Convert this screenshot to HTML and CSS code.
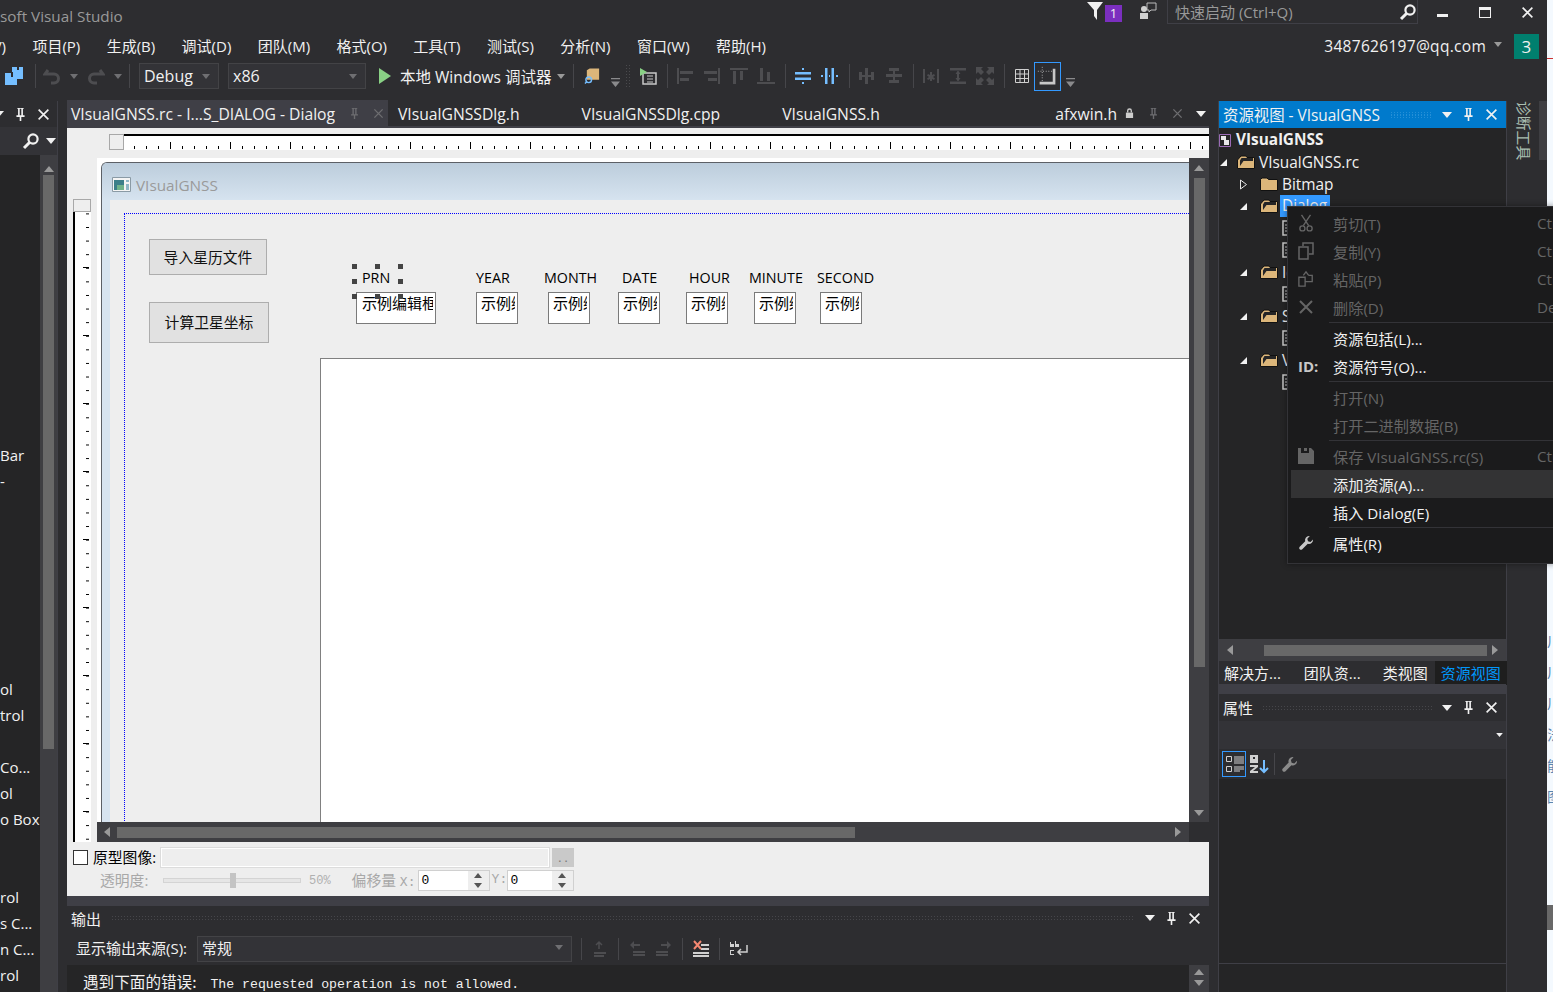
FILE: index.html
```html
<!DOCTYPE html>
<html lang="zh-CN">
<head>
    <meta charset="UTF-8">
    <title>VisualGNSS - Microsoft Visual Studio</title>
    <link rel="stylesheet" href="styles.css">
</head>
<body>
<svg class="sprite" xmlns="http://www.w3.org/2000/svg">
    <symbol id="pin" viewBox="0 0 16 16"><path fill="currentColor" fill-rule="evenodd" d="M4 0h8v1h-1v8h2v2H9v5H7v-5H3V9h2V1H4zM7 1v8h2V1z"/></symbol>
    <symbol id="close" viewBox="0 0 16 16"><path stroke="currentColor" stroke-width="2" d="M2 2l12 12M14 2L2 14"/></symbol>
    <symbol id="caret" viewBox="0 0 10 6"><path fill="currentColor" d="M0 0h10L5 6z"/></symbol>
    <symbol id="search" viewBox="0 0 18 18"><circle cx="11" cy="7" r="4.600" fill="none" stroke="currentColor" stroke-width="2.200"/><path stroke="currentColor" stroke-width="3" d="M7.500 10.500L2 16"/></symbol>
    <symbol id="folder-open" viewBox="0 0 18 14"><path fill="#dcb67a" stroke="#111" d="M.5 5L4 1h5l1 1.500h7.500v11H.5z"/><path fill="#252526" d="M4.500 3H16v3H6.500L3 11V5.500z"/></symbol>
    <symbol id="folder" viewBox="0 0 18 14"><path fill="#dcb67a" stroke="#111" d="M.5 2.500L2 1h5l1.500 1.500h9v11H.5z"/></symbol>
    <symbol id="wrench" viewBox="0 0 16 16"><path fill="currentColor" d="M11 1a4 4 0 0 0-3.800 5.200L1.500 12A1.800 1.800 0 0 0 4 14.500l5.800-5.700A4 4 0 0 0 15 4.500L12.500 7 10 6.300l-.7-2.500L11.800 1.100A4 4 0 0 0 11 1z"/></symbol>
    <symbol id="doc" viewBox="0 0 10 16"><path fill="#252526" stroke="#c8c8c8" stroke-width="1.500" d="M1 1h16v14H1z"/><path stroke="#c8c8c8" d="M3 5h6M3 8h6M3 11h6"/></symbol>
    <symbol id="align-l" viewBox="0 0 18 18"><path fill="currentColor" d="M1 1h2v16H1zM4 4h13v3H4zM4 11h9v3H4z"/></symbol>
    <symbol id="align-r" viewBox="0 0 18 18"><path fill="currentColor" d="M15 1h2v16h-2zM1 4h13v3H1zM5 11h9v3H5z"/></symbol>
    <symbol id="align-t" viewBox="0 0 18 18"><path fill="currentColor" d="M0 1h18v2H0zM3 4h3v13H3zM10 4h3v9h-3z"/></symbol>
    <symbol id="align-b" viewBox="0 0 18 18"><path fill="currentColor" d="M0 15h18v2H0zM3 1h3v13H3zM10 5h3v9h-3z"/></symbol>
    <symbol id="center-v" viewBox="0 0 18 18"><path fill="currentColor" d="M1 5h16v2.500H1zM1 10.500h16V13H1zM8 1h2v2H8zM8 15h2v2H8z"/></symbol>
    <symbol id="center-h" viewBox="0 0 18 18"><path fill="currentColor" d="M4 1h2.500v16H4zM10.500 1H13v16h-2.500zM0 8h2v2H0zM8 8h1v2H8zM15 8h2v2h-2z"/></symbol>
    <symbol id="space-h" viewBox="0 0 18 18"><path fill="currentColor" d="M1 5h3v8H1zM7 1h3v16H7zM13 5h3v8h-3zM4 8h3v2H4zM10 8h3v2h-3z"/></symbol>
    <symbol id="space-v" viewBox="0 0 18 18"><path fill="currentColor" d="M4 1h10v3H4zM1 7h16v3H1zM4 13h10v3H4zM8 4h2v3H8zM8 10h2v3H8z"/></symbol>
    <symbol id="size-w" viewBox="0 0 18 18"><path fill="currentColor" d="M1 2h2v14H1zM15 2h2v14h-2zM8 5h2v3l2-1 1 1.500L11 10l2 1.500L12 13l-2-1v2H8v-2l-2 1-1-1.500L7 10 5 8.500 6 7l2 1z"/></symbol>
    <symbol id="size-h" viewBox="0 0 18 18"><path fill="currentColor" d="M1 1h16v2.500H1zM1 14.500h16V17H1zM8.500 4h1l2 3H10v4h1.500l-2 3h-1l-2-3H8V7H6.500z"/></symbol>
    <symbol id="size-both" viewBox="0 0 18 18"><path fill="currentColor" d="M0 0h7L5 2l3 3-3 3-3-3-2 2zM18 0v7l-2-2-3 3-3-3 3-3-2-2zM0 18v-7l2 2 3-3 3 3-3 3 2 2zM18 18h-7l2-2-3-3 3-3 3 3 2-2z"/></symbol>
    <symbol id="grid" viewBox="0 0 14 14"><path fill="none" stroke="currentColor" d="M.5.500h13v13H.5zM.5 5h13M.5 9.500h13M5 .5v13M9.500.5v13"/></symbol>
    <symbol id="guide" viewBox="0 0 24 24"><path fill="currentColor" d="M18 3h3v18H3v-3h15z"/><path stroke="currentColor" stroke-dasharray="1 2" d="M1 6h18M6 1v17"/></symbol>
    <symbol id="toolbar-more" viewBox="0 0 10 10"><path fill="currentColor" d="M0 0h10v1.500H0zM0 4h10L5 10z"/></symbol>
    <symbol id="scissors" viewBox="0 0 16 20"><path fill="none" stroke="currentColor" stroke-width="1.500" d="M3 1l8 12M13 1L5 13"/><circle cx="4" cy="16" r="2.800" fill="none" stroke="currentColor" stroke-width="1.500"/><circle cx="12" cy="16" r="2.800" fill="none" stroke="currentColor" stroke-width="1.500"/></symbol>
    <symbol id="copy" viewBox="0 0 16 18"><path fill="none" stroke="currentColor" stroke-width="1.500" d="M5 4V1h10v11h-4M1 5h9v12H1z"/></symbol>
    <symbol id="paste" viewBox="0 0 18 18"><path fill="none" stroke="currentColor" stroke-width="1.500" d="M1 7h7v10H1zM8 12h8V5h-4M6 5l3-4 3 4"/></symbol>
    <symbol id="disk" viewBox="0 0 16 16"><path fill="currentColor" fill-rule="evenodd" d="M0 0h3v5h8V0h2l3 3v13H0zM6 0h3v3H6z"/></symbol>
</svg>

<div class="app">
    <div class="main">
        <div class="titlebar">
            <span class="app-title">soft Visual Studio</span>
            <svg class="filter" viewBox="0 0 16 18"><path fill="#f1f1f1" d="M0 0h16L10 8v10L7 14V8z"/></svg>
            <span class="notify">1</span>
            <svg class="feedback" viewBox="0 0 18 18"><path fill="none" stroke="#bbb" d="M8 1h9v7h-5l-2 2v-2H8z"/><circle cx="5" cy="7" r="3" fill="#d0d0d0"/><path fill="#d0d0d0" d="M1 11h8v6H1z"/></svg>
            <div class="quick">
                <span>快速启动 (Ctrl+Q)</span>
                <svg class="ic18"><use href="#search"/></svg>
            </div>
            <span class="win-min"></span>
            <span class="win-max"></span>
            <svg class="win-close"><use href="#close"/></svg>
        </div>

        <div class="menubar">
            <span class="cut"><span>V)</span></span>
            <span>项目(P)</span>
            <span>生成(B)</span>
            <span>调试(D)</span>
            <span>团队(M)</span>
            <span>格式(O)</span>
            <span>工具(T)</span>
            <span>测试(S)</span>
            <span>分析(N)</span>
            <span>窗口(W)</span>
            <span>帮助(H)</span>
            <span class="account">3487626197@qq.com</span>
            <svg class="account-caret"><use href="#caret"/></svg>
            <span class="account-badge">3</span>
        </div>

        <div class="toolbar">
            <svg class="save" viewBox="0 0 20 20"><path fill="#75beff" d="M8 1h5v3h2V1h4v12h-6v6H1V7h7z"/><path fill="#2d2d30" d="M7 6h2v5H7z"/></svg>
            <span class="sep sep-a"></span>
            <svg class="tool dim" viewBox="0 0 18 18"><path fill="none" stroke="currentColor" stroke-width="3" d="M5 3l-3 4h9a4 4 0 0 1 0 9H8"/></svg>
            <svg class="more"><use href="#caret"/></svg>
            <svg class="tool dim redo" viewBox="0 0 18 18"><path fill="none" stroke="currentColor" stroke-width="3" d="M13 3l3 4H7a4 4 0 0 0 0 9h3"/></svg>
            <svg class="more"><use href="#caret"/></svg>
            <span class="sep sep-b"></span>
            <div class="combo combo-debug"><span>Debug</span><svg class="more"><use href="#caret"/></svg></div>
            <div class="combo combo-x86"><span>x86</span><svg class="more"><use href="#caret"/></svg></div>
            <svg class="play" viewBox="0 0 12 16"><path fill="#89d185" d="M0 0l12 8-12 8z"/></svg>
            <span class="debug-label">本地 Windows 调试器</span>
            <svg class="more"><use href="#caret"/></svg>
            <span class="sep sep-c"></span>
            <svg class="tool find" viewBox="0 0 18 18"><path fill="#dcb67a" d="M3 3l3-2h10v12H3z"/><circle cx="5" cy="13" r="3" fill="none" stroke="#75beff" stroke-width="1.500"/><path stroke="#75beff" stroke-width="1.500" d="M3 15l-2 2"/></svg>
            <svg class="tb-more"><use href="#toolbar-more"/></svg>
            <span class="grip-v"></span>
            <svg class="tool test" viewBox="0 0 18 18"><path fill="none" stroke="#c8c8c8" stroke-width="1.500" d="M4 6h13v11H4z"/><path stroke="#c8c8c8" d="M8 9h6M8 12h6M8 15h6"/><path fill="#89d185" d="M1 1l7 4-7 4z"/></svg>
            <span class="sep sep-d"></span>
            <div class="tool-group dim">
                <svg class="tool"><use href="#align-l"/></svg>
                <svg class="tool"><use href="#align-r"/></svg>
                <svg class="tool"><use href="#align-t"/></svg>
                <svg class="tool"><use href="#align-b"/></svg>
            </div>
            <span class="sep sep-d"></span>
            <div class="tool-group blue">
                <svg class="tool"><use href="#center-v"/></svg>
                <svg class="tool"><use href="#center-h"/></svg>
            </div>
            <span class="sep sep-d"></span>
            <div class="tool-group dim">
                <svg class="tool"><use href="#space-h"/></svg>
                <svg class="tool"><use href="#space-v"/></svg>
            </div>
            <span class="sep sep-d"></span>
            <div class="tool-group dim">
                <svg class="tool"><use href="#size-w"/></svg>
                <svg class="tool"><use href="#size-h"/></svg>
                <svg class="tool"><use href="#size-both"/></svg>
            </div>
            <span class="sep sep-d"></span>
            <svg class="tool grid-ic"><use href="#grid"/></svg>
            <span class="guide-btn"><svg><use href="#guide"/></svg></span>
            <svg class="tb-more tb-last"><use href="#toolbar-more"/></svg>
        </div>

        <div class="workspace">
            <aside class="toolbox">
                <div class="panel-head">
                    <svg class="caret-w"><use href="#caret"/></svg>
                    <svg class="ic12"><use href="#pin"/></svg>
                    <svg class="ic12"><use href="#close"/></svg>
                </div>
                <div class="toolbox-search">
                    <svg class="ic18"><use href="#search"/></svg>
                    <svg class="caret-w"><use href="#caret"/></svg>
                </div>
                <div class="toolbox-body">
                    <ul class="toolbox-list">
                        <li>Bar</li>
                        <li>-</li>
                        <li></li><li></li><li></li><li></li><li></li><li></li><li></li>
                        <li>ol</li>
                        <li>trol</li>
                        <li></li>
                        <li>Co...</li>
                        <li>ol</li>
                        <li>o Box</li>
                        <li></li><li></li>
                        <li>rol</li>
                        <li>s C...</li>
                        <li>n C...</li>
                        <li>rol</li>
                    </ul>
                    <div class="vbar toolbox-bar">
                        <span class="arr arr-up"></span>
                        <span class="thumb toolbox-thumb"></span>
                    </div>
                </div>
            </aside>

            <section class="center">
                <div class="tabs">
                    <div class="tab active">
                        <span>VIsualGNSS.rc - I...S_DIALOG - Dialog</span>
                        <svg class="tab-pin"><use href="#pin"/></svg>
                        <svg class="tab-x"><use href="#close"/></svg>
                    </div>
                    <span class="tab">VIsualGNSSDlg.h</span>
                    <span class="tab">VIsualGNSSDlg.cpp</span>
                    <span class="tab">VIsualGNSS.h</span>
                    <div class="tab last">
                        <span>afxwin.h</span>
                        <svg class="tab-lock" viewBox="0 0 10 12"><path fill="none" stroke="#ccc" stroke-width="1.500" d="M3 5V3a2 2 0 0 1 4 0v2"/><path fill="#ccc" d="M1 5h8v6H1z"/></svg>
                        <svg class="tab-pin"><use href="#pin"/></svg>
                        <svg class="tab-x"><use href="#close"/></svg>
                        <svg class="tab-menu"><use href="#caret"/></svg>
                    </div>
                </div>

                <div class="designer">
                    <div class="ruler-top"><span class="ruler-corner"></span><span class="ruler-h"></span></div>
                    <div class="ruler-left"><span class="ruler-corner-v"></span><span class="ruler-v"></span></div>
                    <div class="canvas">
                        <div class="dlg">
                            <div class="dlg-caption">
                                <svg class="dlg-icon" viewBox="0 0 19 15"><path fill="#f4f4f4" stroke="#8a9aa5" d="M.5.500h18v14H.5z"/><path fill="#3c7f8a" d="M2 3h10v10H2z"/><path fill="#6fb28b" d="M5 8h7v5H5z"/><path fill="#8fb7c7" d="M14 3h3v2h-3zM14 7h3v6h-3z"/></svg>
                                <span>VIsualGNSS</span>
                            </div>
                            <div class="dlg-body">
                                <div class="guide"></div>
                                <button class="btn btn-import">导入星历文件</button>
                                <button class="btn btn-calc">计算卫星坐标</button>

                                <span class="lbl lbl-prn">PRN</span>
                                <span class="edit edit-prn">示例编辑框</span>
                                <span class="handle h1"></span><span class="handle h2"></span><span class="handle h3"></span>
                                <span class="handle h4"></span><span class="handle h5"></span>
                                <span class="handle h6"></span><span class="handle h7"></span><span class="handle h8"></span>

                                <span class="lbl lbl-year">YEAR</span>
                                <span class="lbl lbl-month">MONTH</span>
                                <span class="lbl lbl-date">DATE</span>
                                <span class="lbl lbl-hour">HOUR</span>
                                <span class="lbl lbl-minute">MINUTE</span>
                                <span class="lbl lbl-second">SECOND</span>
                                <span class="edit e-year">示例编辑框</span>
                                <span class="edit e-month">示例编辑框</span>
                                <span class="edit e-date">示例编辑框</span>
                                <span class="edit e-hour">示例编辑框</span>
                                <span class="edit e-minute">示例编辑框</span>
                                <span class="edit e-second">示例编辑框</span>

                                <div class="plot"></div>
                            </div>
                        </div>
                    </div>
                    <div class="vbar design-vbar">
                        <span class="arr arr-up"></span>
                        <span class="thumb design-thumb"></span>
                        <span class="arr arr-down"></span>
                    </div>
                    <div class="hbar">
                        <span class="arr arr-left"></span>
                        <span class="hthumb"></span>
                        <span class="arr arr-right"></span>
                    </div>
                    <div class="corner"></div>
                </div>

                <div class="proto">
                    <div class="proto-row">
                        <span class="check"></span>
                        <span class="proto-label">原型图像:</span>
                        <span class="path-box"></span>
                        <span class="dots">. .</span>
                    </div>
                    <div class="proto-row second">
                        <span class="muted lab-alpha">透明度:</span>
                        <span class="slider"><span class="slider-thumb"></span></span>
                        <span class="pct">50%</span>
                        <span class="muted lab-offset">偏移量 <span class="mono">X:</span></span>
                        <span class="spin"><span class="spin-val">0</span><span class="spin-btns"><i class="up"></i><i class="down"></i></span></span>
                        <span class="muted mono lab-y">Y:</span>
                        <span class="spin spin-y"><span class="spin-val">0</span><span class="spin-btns"><i class="up"></i><i class="down"></i></span></span>
                    </div>
                </div>

                <div class="output">
                    <div class="panel-head output-head">
                        <span class="panel-title">输出</span>
                        <span class="grip"></span>
                        <svg class="caret-w"><use href="#caret"/></svg>
                        <svg class="ic12"><use href="#pin"/></svg>
                        <svg class="ic12"><use href="#close"/></svg>
                    </div>
                    <div class="output-tools">
                        <span class="src-label">显示输出来源(S):</span>
                        <div class="src-combo"><span>常规</span><svg class="more"><use href="#caret"/></svg></div>
                        <span class="sep out-sep"></span>
                        <svg class="tool dim" viewBox="0 0 18 18"><path fill="currentColor" d="M3 12h12v2H3zM3 15h10v2H3z"/><path fill="none" stroke="currentColor" stroke-width="1.500" d="M8 9V3M5 5l3-3 3 3"/></svg>
                        <span class="sep out-sep"></span>
                        <div class="tool-group dim">
                            <svg class="tool" viewBox="0 0 18 18"><path fill="currentColor" d="M5 11h12v2H5zM5 14h12v2H5zM2 5l4-4v3h6v2H6v3z"/></svg>
                            <svg class="tool" viewBox="0 0 18 18"><path fill="currentColor" d="M1 11h12v2H1zM1 14h12v2H1zM16 5l-4-4v3H6v2h6v3z"/></svg>
                        </div>
                        <span class="sep out-sep"></span>
                        <svg class="tool" viewBox="0 0 18 18"><path fill="#d0d0d0" d="M9 4h8v2H9zM9 8h8v2H9zM1 12h16v2H1zM1 15h16v2H1z"/><path stroke="#f48771" stroke-width="2" d="M2 1l7 8M9 1l-7 8"/></svg>
                        <span class="sep out-sep"></span>
                        <svg class="tool wrap-ic" viewBox="0 0 20 18"><path fill="none" stroke="#d0d0d0" stroke-width="1.500" d="M18 5v7H9M12 9l-3 3 3 3"/><path fill="#d0d0d0" d="M1 2h1v5H1zM2 4h3v3H2zM6 1h1v6H6zM7 4h3v3H7zM1 10h4v1H2v3h3v1H1z"/></svg>
                    </div>
                    <div class="output-body">
                        <p class="output-text"><span class="cjk">遇到下面的错误:</span> The requested operation is not allowed.</p>
                        <div class="vbar out-vbar">
                            <span class="arr arr-up"></span>
                            <span class="arr arr-down"></span>
                        </div>
                    </div>
                </div>
            </section>

            <aside class="side">
                <div class="panel-head resview-head">
                    <span class="panel-title">资源视图 - VIsualGNSS</span>
                    <span class="grip grip-blue"></span>
                    <svg class="caret-w"><use href="#caret"/></svg>
                    <svg class="ic12"><use href="#pin"/></svg>
                    <svg class="ic12"><use href="#close"/></svg>
                </div>
                <div class="tree">
                    <div class="node root"><svg class="ic-root" viewBox="0 0 12 14"><path fill="none" stroke="#9b6bb5" d="M.5 1.500h11v12H.5z"/><path fill="#e8e8e8" d="M2 3h5v4H2zM5 7h5v5H5z"/></svg><b>VIsualGNSS</b></div>
                    <div class="node lv1"><span class="tri"></span><svg class="ic-folder"><use href="#folder-open"/></svg><span>VIsualGNSS.rc</span></div>
                    <div class="node lv2"><svg class="tri-closed" viewBox="0 0 7 11"><path fill="none" stroke="#e8e8e8" d="M.5 1v9l6-4.500z"/></svg><svg class="ic-folder"><use href="#folder"/></svg><span>Bitmap</span></div>
                    <div class="node lv2"><span class="tri"></span><svg class="ic-folder"><use href="#folder-open"/></svg><span class="selected">Dialog</span></div>
                    <div class="node lv3"><svg class="ic-doc"><use href="#doc"/></svg></div>
                    <div class="node lv3"><svg class="ic-doc"><use href="#doc"/></svg></div>
                    <div class="node lv2"><span class="tri"></span><svg class="ic-folder"><use href="#folder-open"/></svg><span>Icon</span></div>
                    <div class="node lv3"><svg class="ic-doc"><use href="#doc"/></svg></div>
                    <div class="node lv2"><span class="tri"></span><svg class="ic-folder"><use href="#folder-open"/></svg><span>String Table</span></div>
                    <div class="node lv3"><svg class="ic-doc"><use href="#doc"/></svg></div>
                    <div class="node lv2"><span class="tri"></span><svg class="ic-folder"><use href="#folder-open"/></svg><span>Version</span></div>
                    <div class="node lv3"><svg class="ic-doc"><use href="#doc"/></svg></div>
                </div>
                <div class="hbar side-hbar">
                    <span class="arr arr-left"></span>
                    <span class="hthumb side-thumb"></span>
                    <span class="arr arr-right"></span>
                </div>
                <div class="side-tabs">
                    <span>解决方...</span>
                    <span>团队资...</span>
                    <span>类视图</span>
                    <span class="on">资源视图</span>
                </div>
                <div class="panel-head props-head">
                    <span class="panel-title">属性</span>
                    <span class="grip"></span>
                    <svg class="caret-w"><use href="#caret"/></svg>
                    <svg class="ic12"><use href="#pin"/></svg>
                    <svg class="ic12"><use href="#close"/></svg>
                </div>
                <div class="props-combo"><svg class="caret-w"><use href="#caret"/></svg></div>
                <div class="props-tools">
                    <span class="cat-btn"><svg viewBox="0 0 20 20"><path fill="none" stroke="#d0d0d0" d="M1.500 2.500h5v5h-5zM1.500 12.500h5v5h-5z"/><path stroke="#d0d0d0" d="M9 3h10M9 5h10M9 7h10M9 9h10M9 13h10M9 15h10M9 17h6"/></svg></span>
                    <svg class="az" viewBox="0 0 20 20"><path fill="#d0d0d0" d="M1 1h8v8H1zM1 11h8v2L4 17h5v2H1v-2l5-4H1z"/><path fill="#2d2d30" d="M4 3h2v2H4z"/><path stroke="#75beff" stroke-width="2" fill="none" d="M15 6v12M11 14l4 4 4-4"/></svg>
                    <span class="sep props-sep"></span>
                    <svg class="props-wrench"><use href="#wrench"/></svg>
                </div>
                <div class="props-body"></div>
                <div class="side-foot"></div>
            </aside>

            <div class="strip"><span class="strip-label">诊断工具</span></div>
            <div class="strip-bar"></div>
        </div>
    </div>

    <div class="sliver">
        <span>川</span><span>川</span><span>川</span><span>法</span><span>能</span><span>图</span>
    </div>

    <div class="ctx">
        <div class="ctx-item off"><svg class="ctx-ic"><use href="#scissors"/></svg><span>剪切(T)</span><em>Ctrl+X</em></div>
        <div class="ctx-item off"><svg class="ctx-ic"><use href="#copy"/></svg><span>复制(Y)</span><em>Ctrl+C</em></div>
        <div class="ctx-item off"><svg class="ctx-ic"><use href="#paste"/></svg><span>粘贴(P)</span><em>Ctrl+V</em></div>
        <div class="ctx-item off"><svg class="ctx-ic"><use href="#close"/></svg><span>删除(D)</span><em>Del</em></div>
        <div class="ctx-sep"></div>
        <div class="ctx-item"><i class="ctx-ic"></i><span>资源包括(L)...</span></div>
        <div class="ctx-item"><b class="ctx-ic ctx-id">ID:</b><span>资源符号(O)...</span></div>
        <div class="ctx-sep"></div>
        <div class="ctx-item off"><i class="ctx-ic"></i><span>打开(N)</span></div>
        <div class="ctx-item off"><i class="ctx-ic"></i><span>打开二进制数据(B)</span></div>
        <div class="ctx-sep"></div>
        <div class="ctx-item off"><svg class="ctx-ic"><use href="#disk"/></svg><span>保存 VIsualGNSS.rc(S)</span><em>Ctrl+S</em></div>
        <div class="ctx-item hover"><i class="ctx-ic"></i><span>添加资源(A)...</span></div>
        <div class="ctx-item"><i class="ctx-ic"></i><span>插入 Dialog(E)</span></div>
        <div class="ctx-sep"></div>
        <div class="ctx-item"><svg class="ctx-ic ctx-wrench"><use href="#wrench"/></svg><span>属性(R)</span></div>
    </div>
</div>
</body>
</html>
```

FILE: styles.css
```css
* {
    box-sizing: border-box;
}

html, body {
    margin: 0;
    padding: 0;
    height: 100%;
    overflow: hidden;
    background: #2d2d30;
}

body {
    font-family: "Open Sans", "Noto Sans CJK SC", sans-serif;
    font-size: 15px;
    color: #f1f1f1;
}

svg {
    display: block;
    flex: none;
}

.sprite {
    display: none;
}

.app {
    position: relative;
    display: flex;
    width: 1553px;
    height: 992px;
    overflow: hidden;
}

.main {
    display: flex;
    flex-direction: column;
    width: 1547px;
    flex: none;
}

/* title bar */
.titlebar {
    display: flex;
    align-items: flex-start;
    height: 28px;
    flex: none;
}

.app-title {
    width: 124px;
    margin-top: 5px;
    color: #999;
    font-size: 15.300px;
    line-height: 22px;
    white-space: nowrap;
    flex: none;
}

.filter {
    width: 16px;
    height: 18px;
    margin: 2px 0 0 963px;
}

.notify {
    width: 17px;
    height: 17px;
    margin: 5px 0 0 2px;
    background: #7b2fbf;
    font-size: 13px;
    line-height: 17px;
    text-align: center;
}

.feedback {
    width: 18px;
    height: 18px;
    margin: 2px 0 0 17px;
}

.quick {
    display: flex;
    align-items: center;
    justify-content: space-between;
    width: 251px;
    height: 24px;
    margin-left: 10px;
    padding: 0 0 0 7px;
    border: 1px solid #3f3f46;
    border-top: 0;
    color: #999;
    white-space: nowrap;
}

.ic18 {
    width: 18px;
    height: 18px;
    color: #f1f1f1;
}

.win-min {
    width: 11px;
    height: 3px;
    margin: 14px 0 0 19px;
    background: #f1f1f1;
}

.win-max {
    width: 12px;
    height: 11px;
    margin: 7px 0 0 31px;
    border: 1px solid #f1f1f1;
    border-top-width: 3px;
}

.win-close {
    width: 13px;
    height: 13px;
    margin: 6px 0 0 30px;
    color: #f1f1f1;
}

/* menu */
.menubar {
    display: flex;
    align-items: center;
    gap: 26.400px;
    height: 34px;
    flex: none;
    padding-top: 2px;
    line-height: 20px;
    white-space: nowrap;
}

.menubar > span {
    flex: none;
}

.cut {
    display: flex;
    justify-content: flex-end;
    width: 6px;
    overflow: hidden;
}

.account {
    margin-left: 532px;
    font-size: 15.500px;
    letter-spacing: .3px;
}

.account-caret {
    width: 8px;
    height: 5px;
    margin: -4px 0 0 -18px;
    color: #999;
}

.account-badge {
    width: 25px;
    height: 25px;
    margin-left: -15px;
    background: #007f6e;
    font-size: 17px;
    line-height: 25px;
    text-align: center;
}

/* toolbar */
.toolbar {
    display: flex;
    align-items: center;
    height: 28px;
    flex: none;
    padding-left: 4px;
}

.save {
    width: 20px;
    height: 20px;
}

.sep {
    width: 1px;
    height: 24px;
    background: #46464a;
    flex: none;
}

.sep-a {
    margin: 0 7px 0 11px;
}

.sep-b {
    margin: 0 8px 0 7px;
}

.sep-c {
    margin: 0 10px 0 8px;
}

.sep-d {
    margin: 0 8px 0 10px;
}

.tool {
    width: 18px;
    height: 18px;
}

.dim {
    color: #4d4d50;
}

.blue {
    color: #75beff;
}

.tool-group {
    display: flex;
    gap: 9px;
}

.more {
    width: 8px;
    height: 5px;
    margin-left: 9px;
    color: #6f6f72;
}

.redo {
    margin-left: 9px;
}

.combo {
    display: flex;
    align-items: center;
    justify-content: space-between;
    height: 26px;
    padding: 0 8px 0 4px;
    border: 1px solid #434346;
    background: #333337;
    font-size: 16px;
}

.combo-debug {
    width: 80px;
    margin-left: 1px;
}

.combo-x86 {
    width: 138px;
    margin-left: 9px;
}

.play {
    width: 12px;
    height: 16px;
    margin-left: 13px;
}

.debug-label {
    margin-left: 9px;
    font-size: 15.500px;
    white-space: nowrap;
}

.debug-label + .more {
    color: #999;
    margin-left: 5px;
}

.find {
    width: 17px;
}

.tb-more {
    width: 9px;
    height: 9px;
    margin: 12px 0 0 10px;
    color: #8a8a8c;
}

.grip-v {
    width: 6px;
    height: 24px;
    margin: 0 8px 0 5px;
    background-image: radial-gradient(#4a4a4d 1px, transparent 1px);
    background-size: 3px 3px;
}

.test {
    width: 18px;
}

.grid-ic {
    width: 14px;
    height: 14px;
    margin-left: 2px;
    color: #d0d0d0;
}

.guide-btn {
    width: 27px;
    height: 29px;
    margin-left: 5px;
    padding: 2px;
    border: 1px solid #3399ff;
    color: #c8c8c8;
}

.guide-btn svg {
    width: 21px;
    height: 23px;
}

.tb-last {
    margin-left: 5px;
}

/* workspace columns */
.workspace {
    display: flex;
    height: 901px;
    margin-top: 11px;
}

.panel-head {
    display: flex;
    align-items: center;
    background: #2d2d30;
    flex: none;
}

.caret-w {
    width: 10px;
    height: 6px;
    color: #f1f1f1;
}

.ic12 {
    width: 13px;
    height: 15px;
    color: #f1f1f1;
}

.grip {
    flex: 1;
    height: 6px;
    margin: 0 9px;
    background-image: radial-gradient(#46464a 1px, transparent 1px);
    background-size: 3px 3px;
}

.panel-title {
    white-space: nowrap;
    font-size: 15px;
}

/* left toolbox */
.toolbox {
    display: flex;
    flex-direction: column;
    width: 58px;
    flex: none;
    margin-right: 9px;
    overflow: hidden;
    border-right: 1px solid #3f3f46;
}

.toolbox .panel-head {
    justify-content: flex-end;
    gap: 10px;
    height: 26px;
    padding-right: 7px;
}

.toolbox-search {
    display: flex;
    align-items: center;
    height: 28px;
    padding-left: 22px;
    gap: 6px;
    background: #333337;
    flex: none;
}

.toolbox-body {
    display: flex;
    flex: 1;
    background: #252526;
}

.toolbox-list {
    flex: 1;
    margin: 0;
    padding: 287px 0 0;
    list-style: none;
    overflow: hidden;
    white-space: nowrap;
}

.toolbox-list li {
    height: 26px;
    line-height: 26px;
}

.vbar {
    display: flex;
    flex-direction: column;
    align-items: center;
    width: 17px;
    flex: none;
    background: #3e3e42;
}

.thumb {
    width: 11px;
    background: #686868;
    flex: none;
}

.arr {
    width: 0;
    height: 0;
    flex: none;
    border: 5px solid transparent;
}

.arr-up {
    border-top: 0;
    border-bottom: 6px solid #999;
}

.arr-down {
    border-bottom: 0;
    border-top: 6px solid #999;
}

.arr-left {
    border-left: 0;
    border-right: 6px solid #999;
}

.arr-right {
    border-right: 0;
    border-left: 6px solid #999;
}

.toolbox-bar {
    padding-top: 11px;
}

.toolbox-thumb {
    height: 574px;
    margin-top: 3px;
}

/* documents */
.center {
    display: flex;
    flex-direction: column;
    width: 1142px;
    flex: none;
}

.tabs {
    display: flex;
    align-items: center;
    height: 27px;
    flex: none;
    border-bottom: 2px solid #3f3f46;
}

.tab {
    margin-left: 62px;
    white-space: nowrap;
    font-size: 15.700px;
}

.tab.active {
    display: flex;
    align-items: center;
    width: 321px;
    height: 27px;
    margin: 0 10px 0 0;
    padding-left: 4px;
    background: #3f3f46;
}

.tab.active + .tab {
    margin-left: 0;
}

.tab.last {
    display: flex;
    align-items: center;
    margin-left: auto;
}

.tab-pin {
    width: 11px;
    height: 11px;
    margin-left: 14px;
    color: #6d6d70;
}

.tab-x {
    width: 11px;
    height: 11px;
    margin-left: 13px;
    color: #6d6d70;
}

.tab-lock {
    width: 9px;
    height: 11px;
    margin-left: 8px;
}

.tab-menu {
    width: 10px;
    height: 6px;
    margin: 0 3px 0 13px;
    color: #f1f1f1;
}

.designer {
    display: grid;
    grid-template-columns: 30px 1fr 20px;
    grid-template-rows: 30px 664px 20px;
    flex: none;
    background: #eeeeee;
}

.ruler-top {
    grid-column: 1 / 4;
    display: flex;
    height: 16px;
    margin: 6px 0 0 42px;
}

.ruler-corner {
    width: 15px;
    border: 1px solid #a8a8a8;
    background: #eee;
    flex: none;
}

.ruler-h {
    flex: 1;
    border-top: 2px solid #000;
    background:
        linear-gradient(to right, #000 1px, transparent 1px) 10px calc(100% - 1px) / 12px 3px repeat-x,
        linear-gradient(to right, #000 1px, transparent 1px) 46px calc(100% - 1px) / 60px 7px repeat-x,
        #fff;
}

.ruler-left {
    grid-row: 2 / 4;
    display: flex;
    flex-direction: column;
    margin: 41px 6px 0 6px;
}

.ruler-corner-v {
    height: 13px;
    border: 1px solid #a8a8a8;
    background: #eee;
    flex: none;
}

.ruler-v {
    flex: 1;
    border-left: 2px solid #000;
    background:
        linear-gradient(#000 1px, transparent 1px) right 2px top 15px / 3px 13.600px repeat-y,
        linear-gradient(#000 1px, transparent 1px) right 2px top 55px / 6px 68px repeat-y,
        #fff;
}

.canvas {
    grid-column: 2;
    grid-row: 2;
    padding: 4px 0 0 4px;
    overflow: hidden;
    background: #fff;
}

.dlg {
    display: flex;
    flex-direction: column;
    height: 700px;
    border: 1px solid #5c6066;
    border-right: 0;
    border-radius: 6px 0 0 0;
    background: #d7e4f0;
}

.dlg-caption {
    display: flex;
    align-items: center;
    gap: 5px;
    height: 37px;
    flex: none;
    padding: 6px 0 0 10px;
    background: linear-gradient(#bccddc, #d6e3ef);
    border-radius: 5px 0 0 0;
    color: #9a9a9a;
    font-size: 15.300px;
}

.dlg-icon {
    width: 19px;
    height: 15px;
}

/* the dialog surface is a free canvas, controls sit where the form puts them */
.dlg-body {
    position: relative;
    flex: 1;
    margin-left: 8px;
    background: #eee;
}

.guide {
    position: absolute;
    left: 14px;
    top: 13px;
    right: 0;
    bottom: 0;
    border-top: 1px dotted #00f;
    border-left: 1px dotted #00f;
}

.btn {
    position: absolute;
    left: 39px;
    padding: 0 0 2px;
    border: 1px solid #adadad;
    background: #e1e1e1;
    color: #111;
    font: 14.800px "Noto Sans CJK SC", sans-serif;
}

.btn-import {
    top: 39px;
    width: 118px;
    height: 36px;
}

.btn-calc {
    top: 102px;
    width: 120px;
    height: 41px;
}

.lbl {
    position: absolute;
    top: 68px;
    color: #000;
    font-size: 14.300px;
    line-height: 20px;
    white-space: nowrap;
}

.lbl-prn { left: 252px; }
.lbl-year { left: 366px; }
.lbl-month { left: 434px; }
.lbl-date { left: 512px; }
.lbl-hour { left: 579px; }
.lbl-minute { left: 639px; }
.lbl-second { left: 707px; }

.handle {
    position: absolute;
    width: 5px;
    height: 5px;
    background: #444;
}

.h1 { left: 242px; top: 64px; }
.h2 { left: 265px; top: 64px; }
.h3 { left: 288px; top: 64px; }
.h4 { left: 242px; top: 79px; }
.h5 { left: 288px; top: 79px; }
.h6 { left: 242px; top: 94px; }
.h7 { left: 265px; top: 94px; }
.h8 { left: 288px; top: 94px; }

.edit {
    position: absolute;
    top: 92px;
    width: 42px;
    height: 32px;
    padding: 0 0 0 4px;
    border: 1px solid #7a7a7a;
    background: #fff;
    color: #000;
    font-size: 15px;
    line-height: 20px;
    white-space: nowrap;
    overflow: hidden;
}

/* the text is clipped a little before the box edge */
.edit::after {
    content: "";
    position: absolute;
    top: 0;
    right: 0;
    bottom: 0;
    width: 2px;
    background: #fff;
}

.edit-prn { left: 246px; width: 80px; padding-left: 5px; }
.e-year { left: 366px; }
.e-month { left: 438px; }
.e-date { left: 508px; }
.e-hour { left: 576px; }
.e-minute { left: 644px; }
.e-second { left: 710px; }

.plot {
    position: absolute;
    left: 210px;
    top: 158px;
    right: 0;
    bottom: 0;
    border-top: 1px solid #808080;
    border-left: 1px solid #808080;
    background: #fff;
}

.design-vbar {
    grid-column: 3;
    grid-row: 2;
    width: 20px;
    padding-top: 7px;
}

.design-thumb {
    height: 489px;
    margin-top: 7px;
}

.design-vbar .arr-down {
    margin-top: auto;
    margin-bottom: 6px;
}

.hbar {
    grid-column: 2;
    grid-row: 3;
    display: flex;
    align-items: center;
    height: 20px;
    padding: 0 8px 0 7px;
    background: #3e3e42;
}

.hthumb {
    width: 738px;
    height: 11px;
    margin-left: 7px;
    background: #686868;
}

.hbar .arr-right {
    margin-left: auto;
}

.corner {
    grid-column: 3;
    grid-row: 3;
    background: #2d2d30;
}

/* prototype image strip */
.proto {
    height: 54px;
    flex: none;
    padding-top: 5px;
    background: #eee;
    color: #000;
}

.proto-row {
    display: flex;
    align-items: center;
    height: 21px;
    font-size: 14.800px;
}

.proto-row.second {
    margin-top: 2px;
    padding-left: 33px;
}

.check {
    width: 15px;
    height: 15px;
    margin-left: 6px;
    border: 1px solid #333;
    background: #fff;
}

.proto-label {
    width: 66px;
    margin: 0 0 2px 5px;
    white-space: nowrap;
    flex: none;
}

.path-box {
    width: 390px;
    height: 21px;
    margin-left: 1px;
    border: 1px solid #dcdcdc;
    background: #eee;
    box-shadow: inset 0 0 0 1px #fff;
}

.dots {
    width: 22px;
    height: 19px;
    margin-left: 2px;
    background: #c9c9c9;
    color: #777;
    font-size: 12px;
    line-height: 20px;
    text-align: center;
}

.muted {
    margin-bottom: 2px;
    color: #a8a8a8;
}

.mono {
    font-family: "Liberation Mono", monospace;
    font-size: 13px;
}

.lab-alpha {
    width: 63px;
    white-space: nowrap;
}

.slider {
    position: relative;
    width: 138px;
    height: 5px;
    border: 1px solid #d4d4d4;
    background: #e6e6e6;
}

.slider-thumb {
    position: absolute;
    left: 66px;
    top: -6px;
    width: 6px;
    height: 15px;
    background: #c4c4c4;
}

.pct {
    margin-left: 8px;
    color: #b0b0b0;
    font: 12px "Liberation Mono", monospace;
}

.lab-offset {
    margin-left: 21px;
    width: 66px;
    white-space: nowrap;
}

.lab-y {
    width: 17px;
    padding-left: 2px;
}

.spin {
    display: flex;
    width: 72px;
    height: 21px;
    border: 1px solid #d0d0d0;
    background: #fff;
}

.spin-y {
    width: 67px;
}

.spin-val {
    flex: 1;
    padding-left: 3px;
    font: 13px/19px "Liberation Mono", monospace;
}

.spin-btns {
    display: flex;
    flex-direction: column;
    justify-content: space-around;
    align-items: center;
    width: 21px;
    background: #eee;
}

.spin-btns i {
    width: 0;
    height: 0;
    border: 4px solid transparent;
}

.spin-btns .up {
    border-top: 0;
    border-bottom: 5px solid #555;
}

.spin-btns .down {
    border-bottom: 0;
    border-top: 5px solid #555;
}

/* output */
.output {
    display: flex;
    flex-direction: column;
    flex: 1;
    min-height: 0;
    margin-top: 10px;
    box-shadow: 0 -10px 0 #3f3f46;
}

.output-head {
    height: 26px;
    padding: 0 8px 2px 4px;
    gap: 10px;
}

.output-head .grip {
    margin: 0;
}

.output-tools {
    display: flex;
    align-items: center;
    height: 33px;
    flex: none;
    padding-left: 9px;
}

.src-label {
    width: 121px;
    margin-bottom: 2px;
    white-space: nowrap;
    flex: none;
}

.src-combo {
    display: flex;
    align-items: center;
    justify-content: space-between;
    width: 375px;
    height: 26px;
    padding: 0 8px 2px 4px;
    border: 1px solid #434346;
    background: #333337;
    flex: none;
}

.out-sep {
    margin: 0 9px;
}

.output-tools .sep {
    height: 22px;
}

.wrap-ic {
    width: 20px;
}

.output-body {
    display: flex;
    flex: 1;
    min-height: 0;
    overflow: hidden;
    background: #252526;
}

.output-text {
    flex: 1;
    margin: 0;
    padding: 7px 0 0 16px;
    font: 13.200px/18px "Liberation Mono", monospace;
    white-space: nowrap;
}

.cjk {
    margin-right: 6px;
    font: 15.600px/18px "Noto Sans CJK SC", sans-serif;
}

.out-vbar {
    width: 20px;
    padding-top: 4px;
    gap: 5px;
}

/* right column */
.side {
    display: flex;
    flex-direction: column;
    width: 289px;
    flex: none;
    margin-left: 9px;
    border-left: 1px solid #3f3f46;
    border-right: 1px solid #3f3f46;
}

.resview-head {
    height: 27px;
    padding: 0 8px 0 4px;
    gap: 10px;
    background: #007acc;
}

.resview-head .panel-title {
    font-size: 15.400px;
}

.resview-head .grip {
    margin: 0;
    background-image: radial-gradient(#4aa3e0 1px, transparent 1px);
    background-position: left;
}

.tree {
    height: 511px;
    flex: none;
    background: #252526;
    font-size: 15.400px;
}

.node {
    display: flex;
    align-items: center;
    height: 22px;
    white-space: nowrap;
    overflow: hidden;
}

.root {
    height: 23px;
    gap: 5px;
}

.ic-root {
    width: 12px;
    height: 14px;
}

.lv1 {
    padding-left: 1px;
}

.lv1 .tri {
    margin-right: 10px;
}

.lv2 {
    padding-left: 21px;
}

.lv3 {
    padding-left: 63px;
}

.tri {
    width: 0;
    height: 0;
    margin-right: 13px;
    border-style: solid;
    border-width: 0 0 7px 7px;
    border-color: transparent transparent #f1f1f1 transparent;
    flex: none;
}

.tri-closed {
    width: 7px;
    height: 11px;
    margin-right: 13px;
}

.ic-folder {
    width: 18px;
    height: 14px;
    margin-right: 4px;
}

.ic-doc {
    width: 10px;
    height: 16px;
}

.selected {
    margin-left: -2px;
    padding: 0 3px 0 2px;
    line-height: 22px;
    background: #3399ff;
}

.side-hbar {
    height: 22px;
    padding: 0 8px;
    flex: none;
}

.side-thumb {
    width: 223px;
    margin-left: 31px;
    flex: none;
}

.side-hbar .arr-right {
    margin-left: auto;
}

.side-tabs {
    display: flex;
    align-items: center;
    height: 23px;
    flex: none;
    padding-left: 5px;
    white-space: nowrap;
}

.side-tabs span {
    flex: none;
}

.side-tabs span:nth-child(2) {
    margin-left: 23px;
}

.side-tabs span:nth-child(3) {
    margin-left: 22px;
}

.side-tabs .on {
    margin-left: 7px;
    padding: 0 6px;
    line-height: 24px;
    background: #1e1e1e;
    color: #0097fb;
}

.props-head {
    height: 27px;
    margin-top: 10px;
    padding: 0 8px 0 4px;
    gap: 10px;
    box-shadow: 0 -10px 0 #3f3f46;
}

.props-head .grip {
    margin: 0 0 0 -1px;
}

.props-combo {
    display: flex;
    align-items: center;
    justify-content: flex-end;
    height: 28px;
    flex: none;
    padding-right: 3px;
    background: #333337;
}

.props-combo .caret-w {
    width: 7px;
    height: 4px;
}

.props-tools {
    display: flex;
    align-items: center;
    height: 30px;
    flex: none;
    padding-left: 3px;
    background: #2d2d30;
}

.cat-btn {
    width: 24px;
    height: 26px;
    padding: 2px;
    border: 1px solid #3399ff;
}

.cat-btn svg {
    width: 20px;
    height: 20px;
}

.az {
    width: 20px;
    height: 20px;
    margin-left: 3px;
}

.props-sep {
    height: 22px;
    margin: 0 6px 0 5px;
}

.props-wrench {
    width: 17px;
    height: 17px;
    color: #8a8a8a;
}

.props-body {
    height: 185px;
    flex: none;
    background: #252526;
    border-bottom: 1px solid #3f3f46;
}

.side-foot {
    flex: 1;
    background: #252526;
}

.strip {
    width: 30px;
    flex: none;
    padding: 0 0 0 9px;
}

.strip-label {
    display: block;
    writing-mode: vertical-rl;
    text-orientation: sideways;
    color: #a9bdb0;
    font-size: 14.800px;
    line-height: 16px;
}

.strip-bar {
    width: 8px;
    height: 59px;
    margin-left: 2px;
    background: #3e3e42;
    flex: none;
}

/* what is left of the window behind */
.sliver {
    display: flex;
    flex-direction: column;
    width: 6px;
    flex: none;
    padding-top: 626px;
    overflow: hidden;
    background:
        linear-gradient(#c33, #c33) 0 58px / 100% 1px no-repeat,
        linear-gradient(#686868, #686868) 0 905px / 100% 25px no-repeat,
        #f4f9fe;
    color: #5b86b0;
    font-size: 14px;
    line-height: 31px;
}

/* context menu */
.ctx {
    position: absolute;
    left: 1287px;
    top: 206px;
    width: 270px;
    padding: 2px 0 6px 3px;
    border: 1px solid #333337;
    background: #1b1b1c;
    box-shadow: 0 0 6px rgba(0, 0, 0, 0.4);
    font-size: 15.200px;
}

.ctx-item {
    display: flex;
    align-items: center;
    height: 28px;
    white-space: nowrap;
}

.ctx-item em {
    margin-left: auto;
    width: 19px;
    overflow: hidden;
    font-style: normal;
}

.ctx-item.off {
    color: #656565;
}

.ctx-item.hover {
    background: #333334;
}

.ctx-ic {
    display: block;
    width: 16px;
    height: 18px;
    margin: 0 19px 0 7px;
    flex: none;
}

.ctx-id {
    width: 20px;
    margin-right: 15px;
    color: #c8c8c8;
    font-size: 15px;
    line-height: 18px;
    white-space: nowrap;
}

.ctx-wrench {
    color: #c8c8c8;
}

.ctx-sep {
    height: 3px;
    margin-left: 38px;
    background: linear-gradient(#333337, #333337) center / 100% 1px no-repeat;
}
```
